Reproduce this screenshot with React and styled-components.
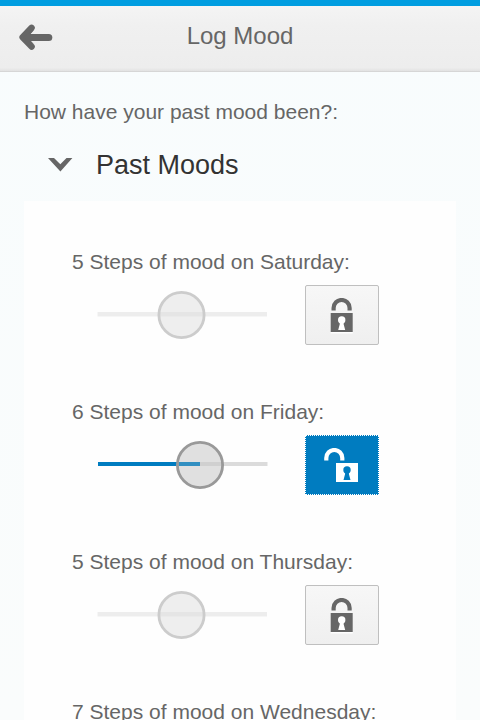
import React from 'react';
import styled, { createGlobalStyle } from 'styled-components';

const GlobalStyle = createGlobalStyle`
  * { box-sizing: border-box; }
  html, body { margin: 0; height: 100%; overflow: hidden; }
  body {
    background: linear-gradient(#f8fcfd, #fafcfc);
    font-family: "Liberation Sans", Arial, sans-serif;
    color: #666;
  }
  svg { display: block; }
`;

const Page = styled.div`
  width: 100%;
  height: 720px;
  overflow: hidden;
`;

const Header = styled.header`
  display: grid;
  grid-template-columns: 72px 1fr 72px;
  align-items: center;
  height: 72px;
  padding-bottom: 3px;
  border-top: 6px solid #009de0;
  border-bottom: 1px solid #d6d6d6;
  background: linear-gradient(#f4f4f4, #f0f0f0 30%, #ededed 95%, #e2e2e2);
`;

const BackButton = styled.button`
  width: 72px;
  height: 60px;
  padding: 0 0 0 19px;
  border: 0;
  background: none;
`;

const Title = styled.h1`
  margin: 0 0 2px;
  font-size: 24px;
  line-height: 28px;
  font-weight: 400;
  text-align: center;
`;

const Question = styled.p`
  margin: 28px 24px 0;
  font-size: 21px;
  line-height: 24px;
`;

const SectionHeader = styled.div`
  display: flex;
  align-items: center;
  height: 72px;
  margin-top: 5px;
  padding-left: 48px;
`;

const SectionTitle = styled.h2`
  margin: 0 0 0 23px;
  font-size: 27px;
  line-height: 32px;
  font-weight: 400;
  color: #333;
  text-shadow: 0 1px 0 #fff;
`;

const Panel = styled.section`
  margin: 0 24px;
  padding: 49px 48px 0;
  background: #fefefe;
`;

const MoodEntry = styled.div`
  height: 150px;
`;

const MoodLabel = styled.div`
  height: 24px;
  font-size: 21px;
  line-height: 24px;
  white-space: nowrap;
`;

const Controls = styled.div`
  display: flex;
  align-items: center;
  height: 60px;
  margin-top: 11px;
  padding-left: 25px;
`;

const LockButton = styled.button`
  display: grid;
  place-items: center;
  width: 74.4px;
  height: 60px;
  margin-left: 37px;
  padding: 3px 1px 0 0;
  border: 1px ${(p) => (p.$open ? 'dotted #fff' : 'solid #bfbfbf')};
  border-radius: ${(p) => (p.$open ? '0' : '2px')};
  background: ${(p) => (p.$open ? '#007cc0' : 'linear-gradient(#f7f7f7, #efefef)')};
`;

const BackIcon = () => (
  <svg width="34" height="26" viewBox="0 0 34 26" fill="none" stroke="#666" strokeLinecap="round" strokeLinejoin="round">
    <path d="M6 13.4H29.8" strokeWidth="7" />
    <path d="M12.6 3.8L3.6 13.2L12.6 22.6" strokeWidth="6.4" />
    <path d="M4 13.2L15.5 5.5L11.5 10V16.6L15.5 21Z" fill="#666" stroke="none" />
  </svg>
);

const ChevronIcon = () => (
  <svg width="25" height="14" viewBox="0 0 25 14">
    <path d="M0 0H6L12.3 6.3L18.5 0H24.4L12.4 13.6Z" fill="#666" />
  </svg>
);

const SliderDrawing = ({ position, active }) => (
  <svg width="171" height="50" viewBox="0 0 171 50">
    <path d={active ? 'M1 24H170.5' : 'M.5 24.3H170'} stroke={active ? '#dbdbdb' : '#ededed'} strokeWidth={active ? 4 : 4.6} />
    {active && <path d={`M1 24H${position}`} stroke="#007cc0" strokeWidth="4" />}
    <circle
      cx={position}
      cy="25"
      r="22.6"
      fill={active ? 'rgba(200,200,200,.56)' : 'rgba(223,223,223,.52)'}
      stroke={active ? '#999' : '#ccc'}
      strokeWidth="2.8"
    />
    {active && <path d={`M${position - 21} 24H${position}`} stroke="#007cc0" strokeOpacity=".55" strokeWidth="4" />}
  </svg>
);

const LockIcon = ({ open }) => {
  const ink = open ? '#fff' : '#666';
  const hole = open ? '#007cc0' : '#fff';
  const bodyX = open ? 12 : 6.7;
  const c = bodyX + 11;
  const s = open ? 10.3 : 17.6;
  return (
    <svg width="36" height="38" viewBox="0 0 36 38">
      {!open && <path d="M6.7 34.7H28.7" stroke="#fff" strokeWidth="1.5" />}
      <path d={`M${s - 8} 12.4V10A8 8 0 0 1 ${s + 8} 10V12.4`} fill="none" stroke={ink} strokeWidth="4.2" />
      <path d={`M${bodyX} 15H${bodyX + 22}V34H${bodyX}Z`} fill={ink} />
      <circle cx={c} cy="22" r="3.7" fill={hole} />
      <path d={`M${c - 1.9} 23H${c + 1.9}V26L${c + 3.5} 32H${c - 3.5}L${c - 1.9} 26Z`} fill={hole} />
    </svg>
  );
};

const moods = [
  { day: 'Saturday', steps: 5, position: 84.5 },
  { day: 'Friday', steps: 6, position: 103, open: true },
  { day: 'Thursday', steps: 5, position: 84.5 },
  { day: 'Wednesday', steps: 7, position: 121.5 },
];

export default function App() {
  return (
    <>
      <GlobalStyle />
      <Page>
        <Header>
          <BackButton aria-label="Back"><BackIcon /></BackButton>
          <Title>Log Mood</Title>
        </Header>
        <Question>How have your past mood been?:</Question>
        <SectionHeader>
          <ChevronIcon />
          <SectionTitle>Past Moods</SectionTitle>
        </SectionHeader>
        <Panel>
          {moods.map(({ day, steps, position, open }) => (
            <MoodEntry key={day}>
              <MoodLabel>{steps} Steps of mood on {day}:</MoodLabel>
              <Controls>
                <SliderDrawing position={position} active={open} />
                <LockButton $open={open} aria-label={`${open ? 'Lock' : 'Unlock'} ${day}`}>
                  <LockIcon open={open} />
                </LockButton>
              </Controls>
            </MoodEntry>
          ))}
        </Panel>
      </Page>
    </>
  );
}
